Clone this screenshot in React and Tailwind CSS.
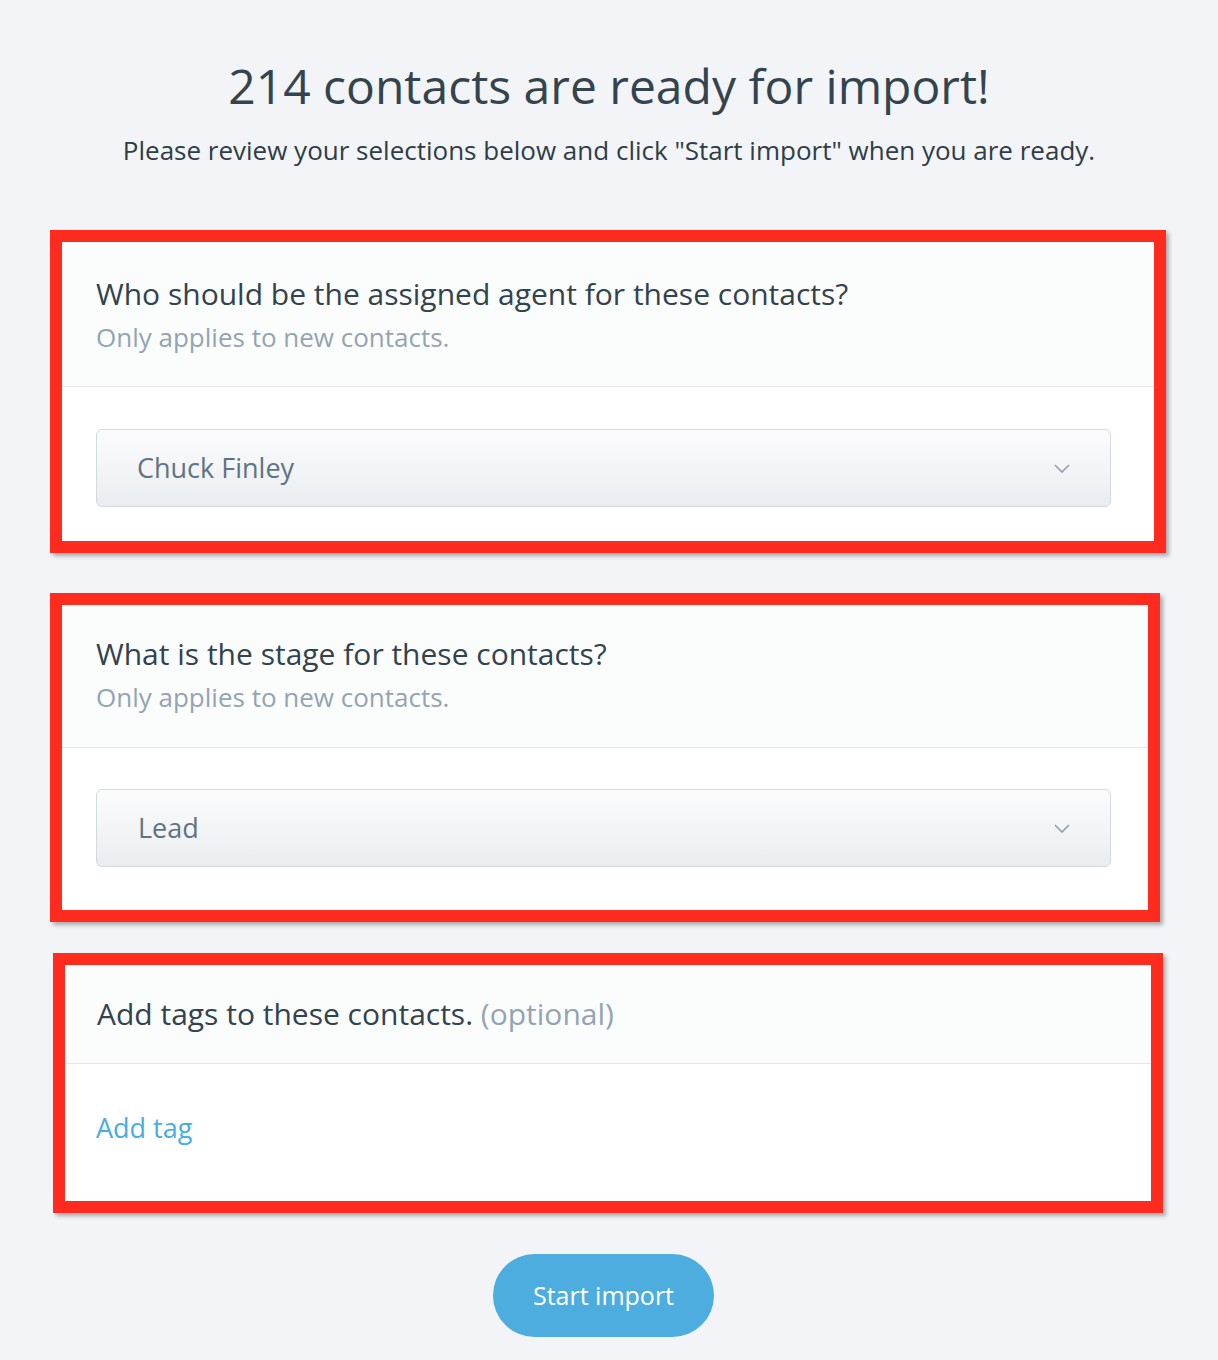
const font = { fontFamily: "'Open Sans', Lato, sans-serif" };

function Chevron() {
  return (
    <svg width="16" height="9" viewBox="0 0 16 9" fill="none">
      <polyline points="1,1 8,8 15,1" stroke="#8e9dab" strokeWidth="1.6" />
    </svg>
  );
}

function SelectBox({ value, textPad }) {
  return (
    <div className="w-[1015px] h-[78px] rounded-[6px] border border-[#d3d9df] bg-gradient-to-b from-[#fcfcfd] to-[#eaedf0] flex items-center justify-between pr-[40px]">
      <span className={`text-[27px] text-[#5f7483] ${textPad}`}>{value}</span>
      <Chevron />
    </div>
  );
}

export default function App() {
  return (
    <div className="min-h-[1360px] w-[1218px] bg-[#f2f4f7] text-[#33434e]" style={font}>
      <div className="pt-[52px] text-center">
        <h1 className="text-[48px] leading-[68px] text-[#34444f]">214 contacts are ready for import!</h1>
        <p className="mt-[13px] text-[26px] leading-[34px] text-[#2f3d47]">
          Please review your selections below and click "Start import" when you are ready.
        </p>
      </div>

      {/* agent */}
      <div className="mt-[63px] ml-[50px] w-[1116px] h-[323px] border-[12px] border-[#ff2b1e] shadow-[3px_3px_4px_rgba(0,0,0,0.3)] bg-white flex flex-col">
        <div className="h-[145px] bg-[#fbfcfc] border-b border-[#e4e8ec] pl-[34px] pt-[33px]">
          <div className="text-[30px] leading-[38px]">Who should be the assigned agent for these contacts?</div>
          <div className="mt-[8px] text-[26px] leading-[32px] text-[#93a4b3]">Only applies to new contacts.</div>
        </div>
        <div className="pl-[34px] pt-[42px]">
          <SelectBox value="Chuck Finley" textPad="pl-[40px]" />
        </div>
      </div>

      {/* stage */}
      <div className="mt-[40px] ml-[50px] w-[1110px] h-[329px] border-[12px] border-[#ff2b1e] shadow-[3px_3px_4px_rgba(0,0,0,0.3)] bg-white flex flex-col">
        <div className="h-[143px] bg-[#fbfcfc] border-b border-[#e4e8ec] pl-[34px] pt-[30px]">
          <div className="text-[30px] leading-[38px]">What is the stage for these contacts?</div>
          <div className="mt-[8px] text-[26px] leading-[32px] text-[#93a4b3]">Only applies to new contacts.</div>
        </div>
        <div className="pl-[34px] pt-[41px]">
          <SelectBox value="Lead" textPad="pl-[41px]" />
        </div>
      </div>

      {/* tags */}
      <div className="mt-[31px] ml-[53px] w-[1110px] h-[260px] border-[12px] border-[#ff2b1e] shadow-[3px_3px_4px_rgba(0,0,0,0.3)] bg-white flex flex-col">
        <div className="h-[99px] bg-[#fbfcfc] border-b border-[#e4e8ec] pl-[32px] pt-[30px]">
          <div className="text-[30px] leading-[38px]">
            Add tags to these contacts. <span className="text-[#93a4b3]">(optional)</span>
          </div>
        </div>
        <div className="pl-[31px] pt-[47px]">
          <span className="text-[27px] leading-[34px] text-[#47aee0] cursor-pointer">Add tag</span>
        </div>
      </div>

      <div className="mt-[41px] flex justify-center">
        <button className="ml-[-11px] w-[221px] h-[83px] rounded-full bg-[#4dadde] text-white text-[25px]">Start import</button>
      </div>
    </div>
  );
}
